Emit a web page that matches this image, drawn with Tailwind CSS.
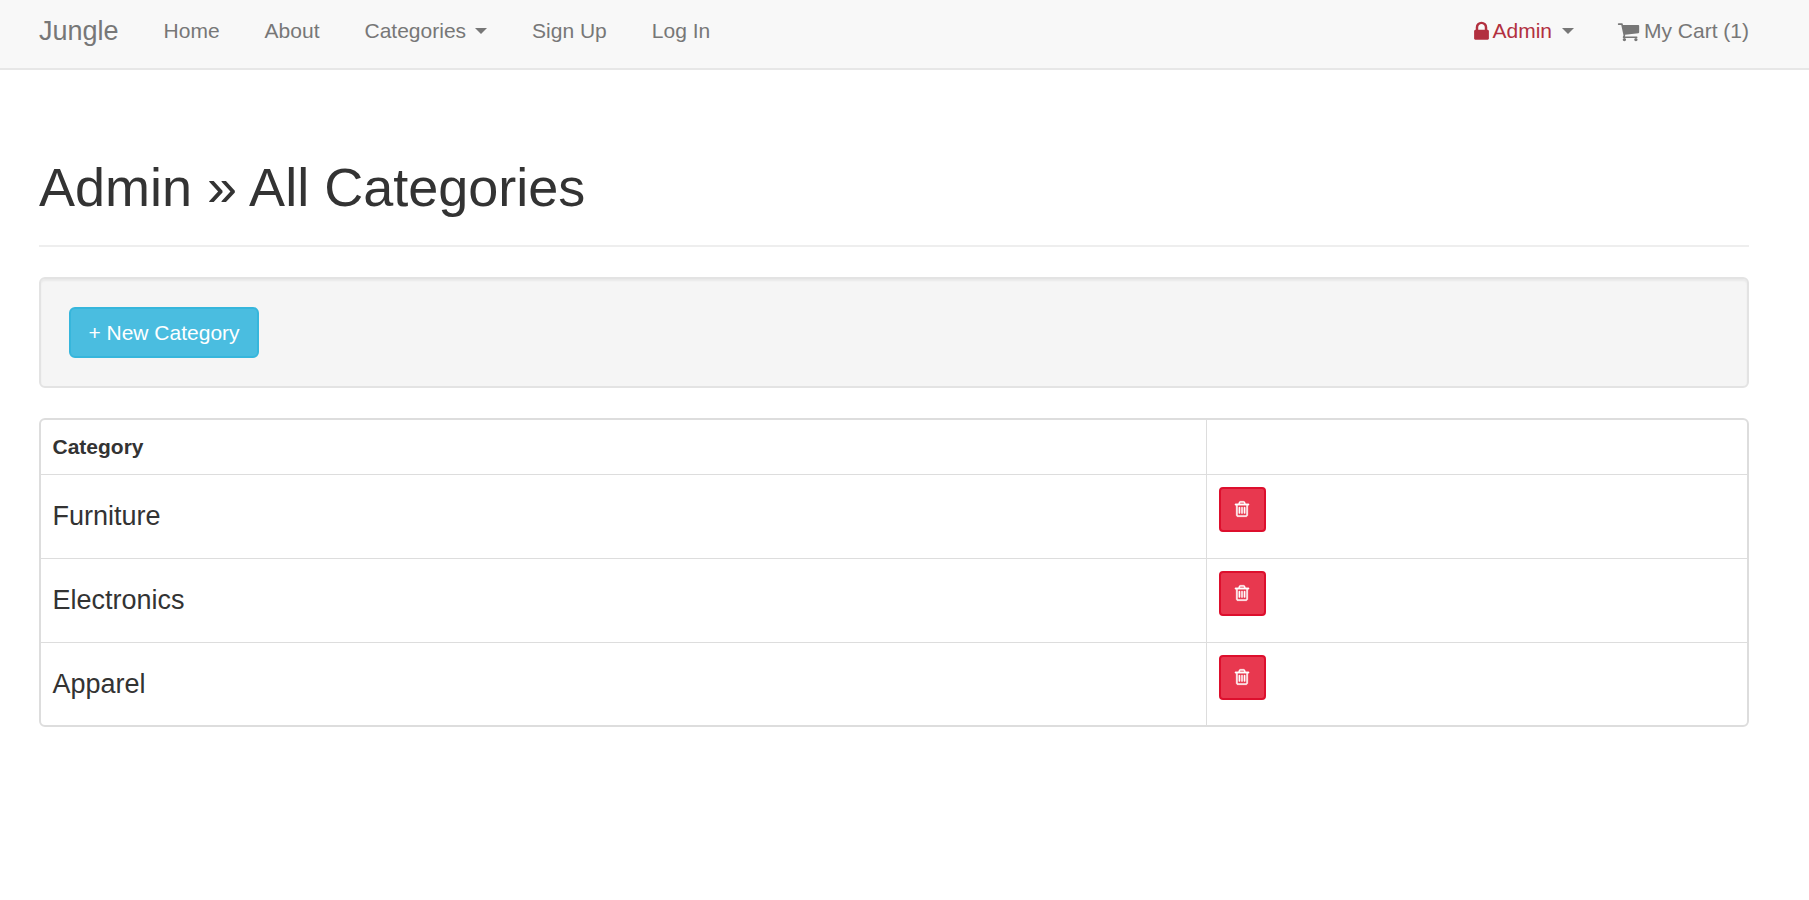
<!DOCTYPE html>
<html lang="en">
<head>
<meta charset="utf-8">
<title>Jungle</title>
<script src="https://cdn.jsdelivr.net/npm/@tailwindcss/browser@4"></script>
</head>
<body class="bg-white font-['Liberation_Sans',Arial,sans-serif] text-[21px] leading-[30px] text-[#333]">
<nav class="h-[70px] bg-[#f8f8f8] border-b-2 border-[#e7e7e7] pl-[39px] pr-[60px] pb-[6px] flex items-center justify-between text-[#777]">
  <div class="flex items-center">
    <a class="text-[27px] mr-[45px]">Jungle</a>
    <ul class="flex items-center gap-[45px]">
      <li>Home</li>
      <li>About</li>
      <li class="flex items-center gap-[9px]">Categories <span class="w-0 h-0 border-x-[6px] border-x-transparent border-t-[6px] border-t-[#777]"></span></li>
      <li>Sign Up</li>
      <li>Log In</li>
    </ul>
  </div>
  <ul class="flex items-center gap-[43px]">
    <li class="flex items-center">
      <svg class="w-[15px] h-[23px] mr-[3px] fill-[#b2303f]" viewBox="0 0 1152 1792"><path d="M320 768h512V576q0-106-75-181t-181-75-181 75-75 181v192zm832 96v576q0 40-28 68t-68 28H96q-40 0-68-28t-28-68V864q0-40 28-68t68-28h32V576q0-184 132-316t316-132 316 132 132 316v192h32q40 0 68 28t28 68z"/></svg>
      <span class="text-[#b2303f]">Admin</span>
      <span class="ml-[10px] w-0 h-0 border-x-[6px] border-x-transparent border-t-[6px] border-t-[#777]"></span>
    </li>
    <li class="flex items-center">
      <svg class="w-[23px] h-[23px] mr-[4px] fill-[#777]" viewBox="0 0 1792 1792"><path d="M704 1536q0 52-38 90t-90 38-90-38-38-90 38-90 90-38 90 38 38 90zm896 0q0 52-38 90t-90 38-90-38-38-90 38-90 90-38 90 38 38 90zm128-1088v512q0 24-16.5 42.5T1671 1024L627 1146q13 60 13 70 0 16-24 64h920q26 0 45 19t19 45-19 45-45 19H512q-26 0-45-19t-19-45q0-11 8-31.5t16-36 21.5-40T509 1207L332 384H128q-26 0-45-19t-19-45 19-45 45-19h256q16 0 28.5 6.5T432 278t13 24.5 8 26 5.5 29.5 4.5 26h1201q26 0 45 19t19 45z"/></svg>
      <span>My Cart (1)</span>
    </li>
  </ul>
</nav>
<main class="pl-[39px] pr-[60px]">
  <header class="mt-[87px] pb-[28px] border-b-2 border-[#eee] mb-[30px]">
    <h1 class="text-[54px] leading-[60px] font-normal">Admin » All Categories</h1>
  </header>
  <section class="h-[111px] bg-[#f5f5f5] border-2 border-[#e3e3e3] rounded-[6px] shadow-[inset_0_2px_2px_rgba(0,0,0,0.05)] px-[28px] flex items-center">
    <button class="h-[51px] w-[190px] rounded-[6px] bg-[#4abde0] border-2 border-[#36b6dc] text-white text-[21px]">+ New Category</button>
  </section>
  <div class="mt-[30px] border-2 border-[#ddd] rounded-[6px] overflow-hidden">
    <table class="w-full table-fixed border-collapse">
      <colgroup><col class="w-[1165px]"><col></colgroup>
      <thead>
        <tr class="h-[54px] border-b border-[#ddd]">
          <th class="px-[11.5px] text-left font-bold border-r border-[#ddd]">Category</th>
          <th></th>
        </tr>
      </thead>
      <tbody class="text-[#333]">
        <tr class="h-[84px] border-b border-[#ddd]">
          <td class="px-[11.5px] align-middle text-[27px] border-r border-[#ddd]">Furniture</td>
          <td class="px-[12px] pt-[12px] align-top">
            <button class="w-[47px] h-[45px] rounded-[4px] bg-[#e8384f] border-2 border-[#dd0f2d] flex items-center justify-center"><svg class="w-[18px] h-[18px] fill-white stroke-white stroke-[40]" viewBox="0 0 1792 1792"><path d="M704 736v576q0 14-9 23t-23 9h-64q-14 0-23-9t-9-23V736q0-14 9-23t23-9h64q14 0 23 9t9 23zm256 0v576q0 14-9 23t-23 9h-64q-14 0-23-9t-9-23V736q0-14 9-23t23-9h64q14 0 23 9t9 23zm256 0v576q0 14-9 23t-23 9h-64q-14 0-23-9t-9-23V736q0-14 9-23t23-9h64q14 0 23 9t9 23zm128 724V512H448v948q0 22 7 40.5t14.5 27 10.5 8.5h832q3 0 10.5-8.5t14.5-27 7-40.5zM672 384h448l-48-117q-7-9-17-11H738q-10 2-17 11zm928 32v64q0 14-9 23t-23 9h-96v948q0 83-47 143.5t-113 60.5H480q-66 0-113-58.5T320 1464V512h-96q-14 0-23-9t-9-23v-64q0-14 9-23t23-9h309l70-167q15-37 54-63t79-26h320q40 0 79 26t54 63l70 167h309q14 0 23 9t9 23z"/></svg></button>
          </td>
        </tr>
        <tr class="h-[84px] border-b border-[#ddd]">
          <td class="px-[11.5px] align-middle text-[27px] border-r border-[#ddd]">Electronics</td>
          <td class="px-[12px] pt-[12px] align-top">
            <button class="w-[47px] h-[45px] rounded-[4px] bg-[#e8384f] border-2 border-[#dd0f2d] flex items-center justify-center"><svg class="w-[18px] h-[18px] fill-white stroke-white stroke-[40]" viewBox="0 0 1792 1792"><path d="M704 736v576q0 14-9 23t-23 9h-64q-14 0-23-9t-9-23V736q0-14 9-23t23-9h64q14 0 23 9t9 23zm256 0v576q0 14-9 23t-23 9h-64q-14 0-23-9t-9-23V736q0-14 9-23t23-9h64q14 0 23 9t9 23zm256 0v576q0 14-9 23t-23 9h-64q-14 0-23-9t-9-23V736q0-14 9-23t23-9h64q14 0 23 9t9 23zm128 724V512H448v948q0 22 7 40.5t14.5 27 10.5 8.5h832q3 0 10.5-8.5t14.5-27 7-40.5zM672 384h448l-48-117q-7-9-17-11H738q-10 2-17 11zm928 32v64q0 14-9 23t-23 9h-96v948q0 83-47 143.5t-113 60.5H480q-66 0-113-58.5T320 1464V512h-96q-14 0-23-9t-9-23v-64q0-14 9-23t23-9h309l70-167q15-37 54-63t79-26h320q40 0 79 26t54 63l70 167h309q14 0 23 9t9 23z"/></svg></button>
          </td>
        </tr>
        <tr class="h-[83px]">
          <td class="px-[11.5px] align-middle text-[27px] border-r border-[#ddd]">Apparel</td>
          <td class="px-[12px] pt-[12px] align-top">
            <button class="w-[47px] h-[45px] rounded-[4px] bg-[#e8384f] border-2 border-[#dd0f2d] flex items-center justify-center"><svg class="w-[18px] h-[18px] fill-white stroke-white stroke-[40]" viewBox="0 0 1792 1792"><path d="M704 736v576q0 14-9 23t-23 9h-64q-14 0-23-9t-9-23V736q0-14 9-23t23-9h64q14 0 23 9t9 23zm256 0v576q0 14-9 23t-23 9h-64q-14 0-23-9t-9-23V736q0-14 9-23t23-9h64q14 0 23 9t9 23zm256 0v576q0 14-9 23t-23 9h-64q-14 0-23-9t-9-23V736q0-14 9-23t23-9h64q14 0 23 9t9 23zm128 724V512H448v948q0 22 7 40.5t14.5 27 10.5 8.5h832q3 0 10.5-8.5t14.5-27 7-40.5zM672 384h448l-48-117q-7-9-17-11H738q-10 2-17 11zm928 32v64q0 14-9 23t-23 9h-96v948q0 83-47 143.5t-113 60.5H480q-66 0-113-58.5T320 1464V512h-96q-14 0-23-9t-9-23v-64q0-14 9-23t23-9h309l70-167q15-37 54-63t79-26h320q40 0 79 26t54 63l70 167h309q14 0 23 9t9 23z"/></svg></button>
          </td>
        </tr>
      </tbody>
    </table>
  </div>
</main>
</body>
</html>
